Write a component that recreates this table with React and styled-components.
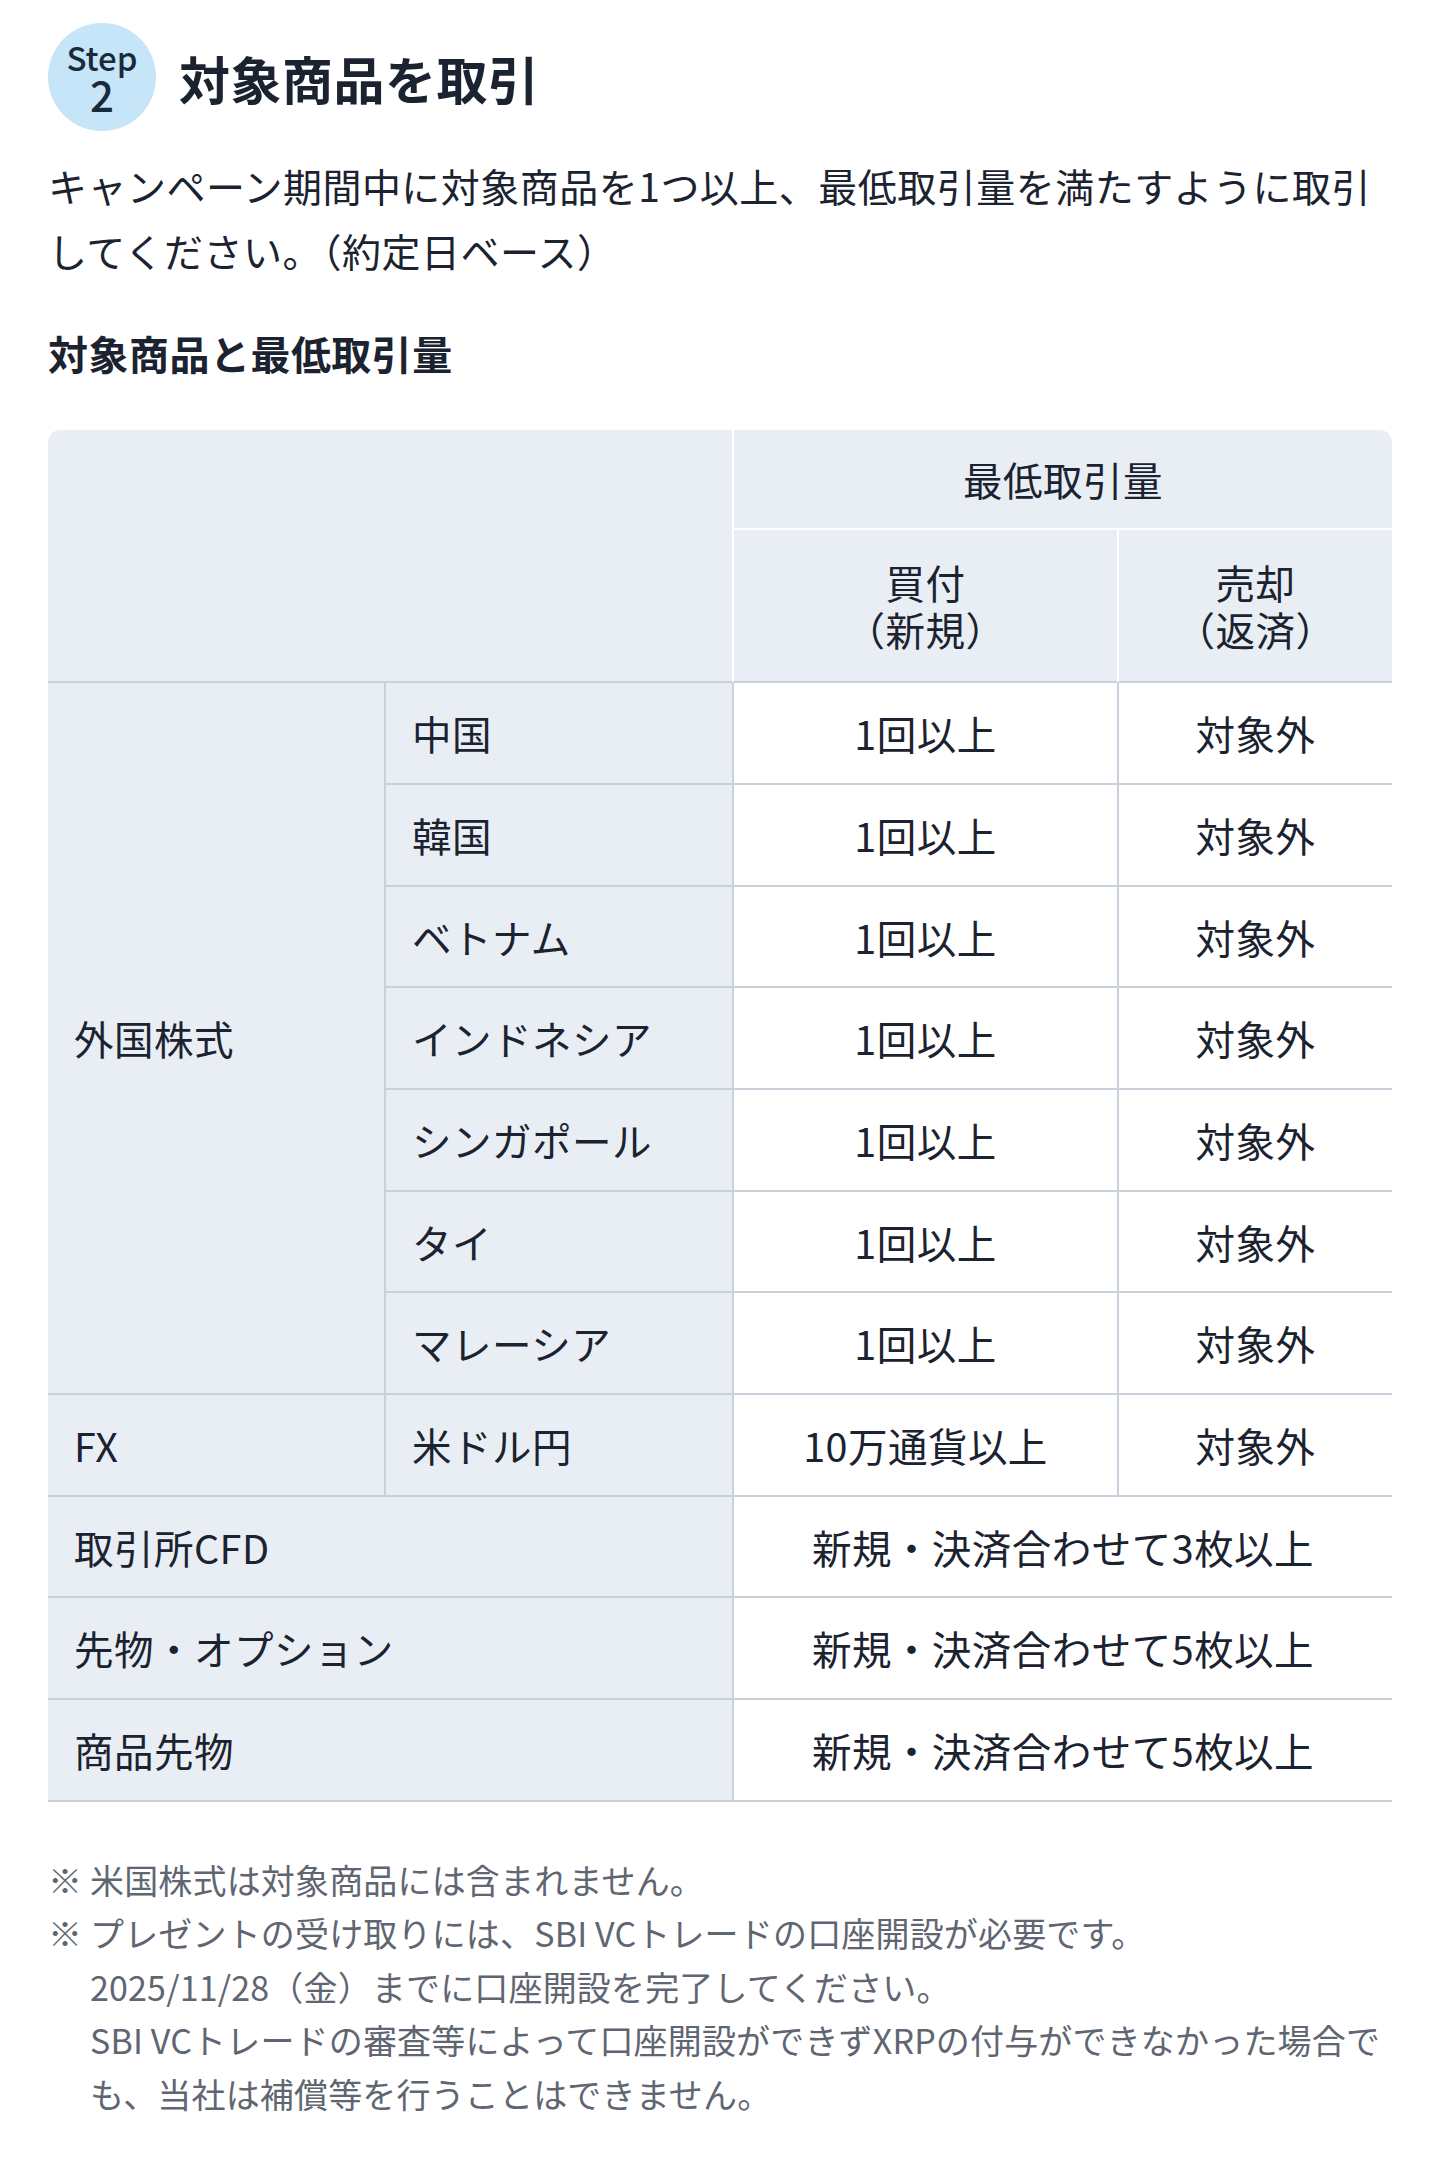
import React from "react";
import styled, { createGlobalStyle } from "styled-components";

const GlobalStyle = createGlobalStyle`
  body {
    margin: 0;
    background: #ffffff;
    color: #1b2230;
    font-family: "Noto Sans CJK JP", "Noto Sans", sans-serif;
  }
`;

const Page = styled.main`
  padding: 23px 48px 56px;
  letter-spacing: 0.03em;
`;

const StepHeader = styled.header`
  display: flex;
  align-items: center;
  gap: 23px;
`;

const StepBadge = styled.div`
  width: 108px;
  height: 108px;
  border-radius: 50%;
  background: #c6e5f8;
  display: flex;
  flex-direction: column;
  align-items: center;
  justify-content: center;
  flex-shrink: 0;
  color: #1b2a3a;
  letter-spacing: 0;
`;

const StepLabel = styled.span`
  font-size: 33px;
  font-weight: 500;
  line-height: 34px;
`;

const StepNumber = styled.span`
  font-size: 42px;
  font-weight: 500;
  line-height: 40px;
`;

const Title = styled.h2`
  margin: 4px 0 0;
  font-size: 51px;
  font-weight: 700;
  line-height: 1.2;
`;

const Lead = styled.p`
  margin: 22px 0 0;
  font-size: 39px;
  line-height: 65px;
`;

const SubTitle = styled.h3`
  margin: 42px 0 0;
  font-size: 40px;
  font-weight: 700;
  line-height: 57px;
`;

const TableFrame = styled.div`
  margin-top: 48px;
  border-radius: 12px 12px 0 0;
  overflow: hidden;
`;

const Table = styled.table`
  width: 100%;
  border-collapse: separate;
  border-spacing: 0;
  table-layout: fixed;
  font-size: 39.5px;
  line-height: 47.7px;
`;

const Col = styled.col`
  width: ${({ $w }) => $w}px;
`;

const HeadCell = styled.th`
  background: #e9eef5;
  font-weight: 400;
  padding: ${({ $tall }) => ($tall ? "28px" : "25px")} 10px;
  text-align: center;
  border-left: ${({ $first }) => ($first ? "none" : "2px solid #ffffff")};
  border-bottom: 2px solid ${({ $last }) => ($last ? "#c9d1dd" : "#ffffff")};
`;

const Cell = styled.td`
  background: ${({ $label }) => ($label ? "#e9eef5" : "#ffffff")};
  padding: 26px ${({ $label }) => ($label ? "10px 26px 26px" : "10px")};
  text-align: ${({ $label }) => ($label ? "left" : "center")};
  white-space: nowrap;
  border-left: ${({ $first }) => ($first ? "none" : "2px solid #c9d1dd")};
  border-bottom: 2px solid #c9d1dd;
`;

const Notes = styled.ul`
  list-style: none;
  margin: 51px 0 0;
  padding: 0;
  font-size: 34px;
  line-height: 53.5px;
  letter-spacing: 0.005em;
  color: #5f6672;
`;

const Note = styled.li`
  display: flex;
`;

const NoteMark = styled.span`
  flex: 0 0 42px;
  letter-spacing: 0;
`;

const NoteText = styled.span`
  flex: 1;
`;

const countries = ["中国", "韓国", "ベトナム", "インドネシア", "シンガポール", "タイ", "マレーシア"];

const combined = [
  { name: "取引所CFD", rule: "新規・決済合わせて3枚以上" },
  { name: "先物・オプション", rule: "新規・決済合わせて5枚以上" },
  { name: "商品先物", rule: "新規・決済合わせて5枚以上" },
];

export default function App() {
  return (
    <>
      <GlobalStyle />
      <Page>
        <StepHeader>
          <StepBadge>
            <StepLabel>Step</StepLabel>
            <StepNumber>2</StepNumber>
          </StepBadge>
          <Title>対象商品を取引</Title>
        </StepHeader>

        <Lead>
          キャンペーン期間中に対象商品を1つ以上、最低取引量を満たすように取引してください。（約定日ベース）
        </Lead>

        <SubTitle>対象商品と最低取引量</SubTitle>

        <TableFrame>
          <Table>
            <colgroup>
              <Col $w={336} />
              <Col $w={348} />
              <Col $w={385} />
              <Col $w={275} />
            </colgroup>
            <thead>
              <tr>
                <HeadCell $first $last rowSpan={2} colSpan={2} />
                <HeadCell colSpan={2}>最低取引量</HeadCell>
              </tr>
              <tr>
                <HeadCell $last $tall>
                  買付
                  <br />
                  （新規）
                </HeadCell>
                <HeadCell $last $tall>
                  売却
                  <br />
                  （返済）
                </HeadCell>
              </tr>
            </thead>
            <tbody>
              {countries.map((c, i) => (
                <tr key={c}>
                  {i === 0 && (
                    <Cell $label $first rowSpan={countries.length}>
                      外国株式
                    </Cell>
                  )}
                  <Cell $label>{c}</Cell>
                  <Cell>1回以上</Cell>
                  <Cell>対象外</Cell>
                </tr>
              ))}
              <tr>
                <Cell $label $first>
                  FX
                </Cell>
                <Cell $label>米ドル円</Cell>
                <Cell>10万通貨以上</Cell>
                <Cell>対象外</Cell>
              </tr>
              {combined.map((r) => (
                <tr key={r.name}>
                  <Cell $label $first colSpan={2}>
                    {r.name}
                  </Cell>
                  <Cell colSpan={2}>{r.rule}</Cell>
                </tr>
              ))}
            </tbody>
          </Table>
        </TableFrame>

        <Notes>
          <Note>
            <NoteMark>※</NoteMark>
            <NoteText>米国株式は対象商品には含まれません。</NoteText>
          </Note>
          <Note>
            <NoteMark>※</NoteMark>
            <NoteText>
              プレゼントの受け取りには、SBI VCトレードの口座開設が必要です。
              <br />
              2025/11/28（金）までに口座開設を完了してください。
              <br />
              SBI VCトレードの審査等によって口座開設ができずXRPの付与ができなかった場合でも、当社は補償等を行うことはできません。
            </NoteText>
          </Note>
        </Notes>
      </Page>
    </>
  );
}
